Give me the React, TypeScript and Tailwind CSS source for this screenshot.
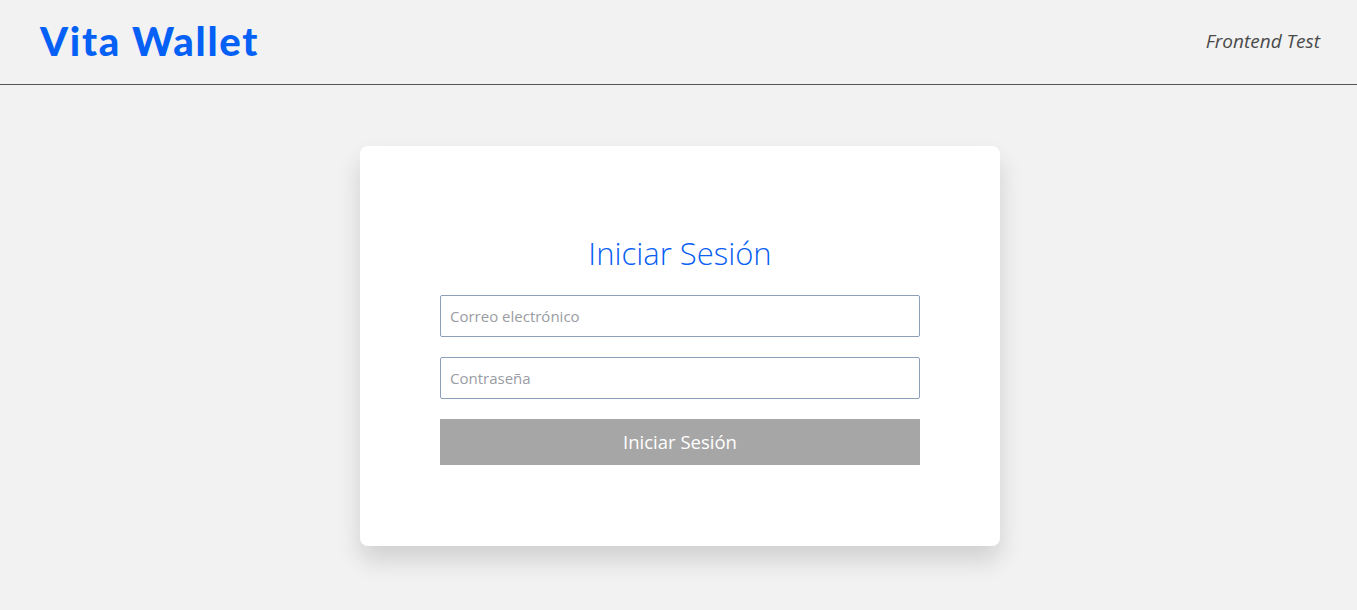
import React from "react";

export default function App() {
  return (
    <div className="min-h-screen bg-[#f2f2f2]" style={{ fontFamily: '"Open Sans", "Noto Sans", sans-serif' }}>
      <header className="flex h-[85px] items-center justify-between border-b border-[#555555] pl-[40px] pr-[37px]">
        <h1
          className="pb-[2px] text-[40px] leading-none font-black tracking-[1.7px] text-[#0561f5]"
          style={{ fontFamily: '"Lato", "Open Sans", sans-serif' }}
        >
          Vita Wallet
        </h1>
        <span className="mb-[2px] text-[19px] italic text-[#4a4a4a]">Frontend Test</span>
      </header>
      <main className="flex justify-center pl-[3px] pt-[61px]">
        <div className="flex h-[400px] w-[640px] flex-col items-center rounded-[8px] bg-white pt-[84px] shadow-[0_14px_24px_rgba(0,0,0,0.14)]">
          <h2 className="text-[31px] leading-[46px] font-light text-[#0b5ff2]">Iniciar Sesión</h2>
          <form className="mt-[19px] flex w-[480px] flex-col gap-[20px]">
            <input
              type="email"
              placeholder="Correo electrónico"
              className="h-[42px] w-full rounded-[2px] border border-[#8e9fb9] bg-white px-[9px] text-[15px] text-[#333] placeholder:text-[#9a9ca3] outline-none"
            />
            <input
              type="password"
              placeholder="Contraseña"
              className="h-[42px] w-full rounded-[2px] border border-[#8e9fb9] bg-white px-[9px] text-[15px] text-[#333] placeholder:text-[#9a9ca3] outline-none"
            />
            <button
              type="button"
              className="h-[46px] w-full bg-[#a6a6a6] text-[18.5px] text-white"
            >
              Iniciar Sesión
            </button>
          </form>
        </div>
      </main>
    </div>
  );
}
